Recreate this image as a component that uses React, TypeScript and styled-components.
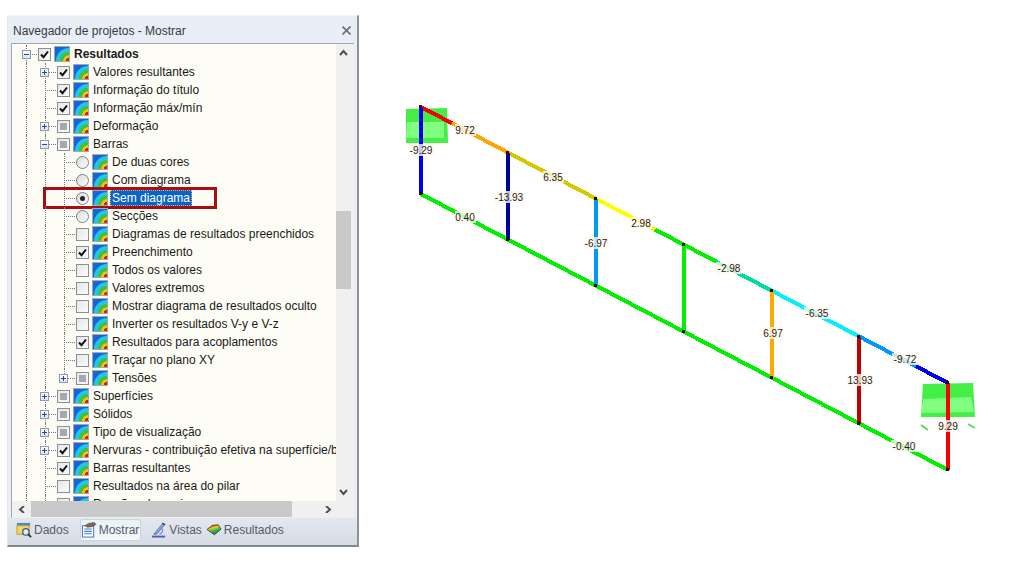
import React from 'react';
import styled, { createGlobalStyle } from 'styled-components';

const GlobalStyle = createGlobalStyle`
  html, body {
    margin: 0;
    background: #fff;
    overflow: hidden;
  }
`;

const FONT = `'Liberation Sans', Arial, sans-serif`;

const Page = styled.div`
  display: flex;
  align-items: flex-start;
  width: 1023px;
  height: 574px;
  font-family: ${FONT};
`;

const Panel = styled.div`
  box-sizing: border-box;
  width: 352px;
  height: 532px;
  margin: 15px 0 0 7px;
  display: flex;
  flex-direction: column;
  flex-shrink: 0;
  background: #e9edf5;
  border-top: 1px solid #f3f4f6;
  border-left: 1px solid #e4e6ea;
  border-right: 2px solid #8f9196;
  border-bottom: 2px solid #7f8a90;
`;

const Header = styled.div`
  height: 27px;
  display: flex;
  align-items: center;
  justify-content: space-between;
  padding: 2px 6px 0 5px;
  box-sizing: border-box;
`;

const Title = styled.span`
  font-size: 12px;
  color: #333b46;
`;

const CloseIcon = styled.svg`
  width: 9px;
  height: 9px;
  stroke: #6d6d6d;
  stroke-width: 1.6;
`;

const Frame = styled.div`
  margin: 0 3px 0 3px;
  height: 475px;
  box-sizing: border-box;
  border: 1px solid #a2a6ae;
  border-bottom-color: #b8bcc4;
  display: grid;
  grid-template-columns: 324px 18px;
  grid-template-rows: 457px 17px;
`;

const Tree = styled.div`
  background: #fdfdf6;
  overflow: hidden;
  padding-top: 1px;
  box-sizing: border-box;
`;

const Row = styled.div`
  position: relative;
  display: flex;
  align-items: center;
  height: 18px;
  padding-left: 5px;
  font-size: 12px;
  color: #1a1a1a;
  white-space: nowrap;
`;

const Indent = styled.span<{ $w: number; $spine?: boolean; $stub?: boolean; $end?: boolean }>`
  position: relative;
  display: flex;
  align-items: center;
  justify-content: center;
  width: ${p => p.$w}px;
  height: 18px;
  flex-shrink: 0;

  &::before {
    content: '';
    display: ${p => (p.$spine ? 'block' : 'none')};
    position: absolute;
    left: 50%;
    top: 0;
    bottom: ${p => (p.$end ? '9px' : '0')};
    border-left: 1px dotted #77797c;
  }

  &::after {
    content: '';
    display: ${p => (p.$stub ? 'block' : 'none')};
    position: absolute;
    left: 50%;
    right: -4px;
    top: 9px;
    border-top: 1px dotted #77797c;
  }
`;

const Expander = styled.span`
  position: relative;
  z-index: 1;
  box-sizing: border-box;
  width: 9px;
  height: 9px;
  border: 1px solid #8b9bb3;
  background: linear-gradient(#ffffff, #dfe3ea);
  display: block;

  svg {
    display: block;
    width: 7px;
    height: 7px;
    stroke: #2b4a8c;
    stroke-width: 1;
  }
`;

const Box = styled.span<{ $state: 'on' | 'off' | 'mixed' }>`
  position: relative;
  z-index: 1;
  box-sizing: border-box;
  width: 13px;
  height: 13px;
  margin-left: 3px;
  flex-shrink: 0;
  border: 1px solid #8c8e92;
  background: linear-gradient(135deg, #e6e7ea, #fbfbfd);
  display: flex;
  align-items: center;
  justify-content: center;

  &::before {
    content: '';
    display: ${p => (p.$state === 'mixed' ? 'block' : 'none')};
    width: 7px;
    height: 7px;
    background: #a6a8ac;
  }

  svg {
    width: 9px;
    height: 9px;
    stroke: #111;
    stroke-width: 2;
    fill: none;
  }
`;

const Radio = styled.span<{ $on?: boolean }>`
  position: relative;
  z-index: 1;
  box-sizing: border-box;
  width: 13px;
  height: 13px;
  margin-left: 3px;
  flex-shrink: 0;
  border: 1px solid #7f8185;
  border-radius: 50%;
  background: linear-gradient(135deg, #d8d9dd, #ffffff);
  display: flex;
  align-items: center;
  justify-content: center;

  &::before {
    content: '';
    display: ${p => (p.$on ? 'block' : 'none')};
    width: 5px;
    height: 5px;
    border-radius: 50%;
    background: #222;
  }
`;

const ColorIcon = styled.span`
  box-sizing: border-box;
  width: 16px;
  height: 16px;
  margin-left: 3px;
  flex-shrink: 0;
  border: 1px solid #a4a9ae;
  background: radial-gradient(
    circle at 100% 100%,
    #e11b14 0 3px,
    #f2c40f 3.5px 5.5px,
    #3fc23a 6px 9px,
    #22c6e6 9.5px 12.5px,
    #1565dc 13.5px
  );
`;

const Label = styled.span<{ $bold?: boolean; $selected?: boolean }>`
  margin-left: 2px;
  padding: 0 2px;
  line-height: 16px;
  height: 16px;
  font-weight: ${p => (p.$bold ? 700 : 400)};
  color: ${p => (p.$selected ? '#fff' : 'inherit')};
  background: ${p => (p.$selected ? '#0a64c8' : 'transparent')};
  outline: ${p => (p.$selected ? '1px dotted #e8b070' : 'none')};
  outline-offset: -1px;
`;

const Highlight = styled.span`
  position: absolute;
  left: 31px;
  top: -2px;
  width: 174px;
  height: 22px;
  box-sizing: border-box;
  border: 3px solid #a80d12;
  pointer-events: none;
`;

const ScrollV = styled.div`
  background: #f0f0f0;
  display: flex;
  flex-direction: column;
  align-items: flex-start;
`;

const ScrollH = styled.div`
  background: #f0f0f0;
  display: flex;
  align-items: flex-start;
  padding-left: 1px;
`;

const Corner = styled.div`
  background: #f0f0f0;
`;

const Arrow = styled.span<{ $w: number }>`
  width: ${p => p.$w}px;
  height: 17px;
  display: flex;
  align-items: center;
  justify-content: center;
  flex-shrink: 0;

  svg {
    width: 9px;
    height: 7px;
    fill: none;
    stroke: #505050;
    stroke-width: 2;
  }
`;

const ThumbV = styled.span`
  width: 15px;
  height: 78px;
  margin: 150px 0 195px;
  background: #c9c9c9;
  flex-shrink: 0;
`;

const ThumbH = styled.span`
  width: 261px;
  height: 16px;
  margin-right: 26px;
  background: #c9c9c9;
  flex-shrink: 0;
`;

const Tabs = styled.div`
  flex: 1;
  display: flex;
  align-items: flex-start;
  padding: 1px 0 0 6px;
  background: linear-gradient(#e3e7ef, #d6dbe5);
`;

const Tab = styled.div<{ $active?: boolean; $gap: number }>`
  box-sizing: border-box;
  height: 22px;
  display: flex;
  align-items: center;
  gap: 2px;
  margin-right: ${p => p.$gap}px;
  padding: 0 1px 0 ${p => (p.$active ? 0 : 1)}px;
  font-size: 12px;
  color: #555d68;
  border-radius: 3px;
  border: 1px solid ${p => (p.$active ? '#c9d6dc' : 'transparent')};
  background: ${p => (p.$active ? 'linear-gradient(#e8f2f4, #f4f7f8)' : 'transparent')};

  svg {
    width: 16px;
    height: 16px;
    flex-shrink: 0;
  }
`;

const Diagram = styled.svg`
  display: block;
  width: 664px;
  height: 574px;
  flex-shrink: 0;
`;

type RowData = {
  level: 0 | 1 | 2;
  text: string;
  kind: 'check' | 'radio';
  state: 'on' | 'off' | 'mixed';
  expand?: '+' | '-';
  bold?: boolean;
  selected?: boolean;
};

const rows: RowData[] = [
  { level: 0, text: 'Resultados', kind: 'check', state: 'on', expand: '-', bold: true },
  { level: 1, text: 'Valores resultantes', kind: 'check', state: 'on', expand: '+' },
  { level: 1, text: 'Informação do título', kind: 'check', state: 'on' },
  { level: 1, text: 'Informação máx/mín', kind: 'check', state: 'on' },
  { level: 1, text: 'Deformação', kind: 'check', state: 'mixed', expand: '+' },
  { level: 1, text: 'Barras', kind: 'check', state: 'mixed', expand: '-' },
  { level: 2, text: 'De duas cores', kind: 'radio', state: 'off' },
  { level: 2, text: 'Com diagrama', kind: 'radio', state: 'off' },
  { level: 2, text: 'Sem diagrama', kind: 'radio', state: 'on', selected: true },
  { level: 2, text: 'Secções', kind: 'radio', state: 'off' },
  { level: 2, text: 'Diagramas de resultados preenchidos', kind: 'check', state: 'off' },
  { level: 2, text: 'Preenchimento', kind: 'check', state: 'on' },
  { level: 2, text: 'Todos os valores', kind: 'check', state: 'off' },
  { level: 2, text: 'Valores extremos', kind: 'check', state: 'off' },
  { level: 2, text: 'Mostrar diagrama de resultados oculto', kind: 'check', state: 'off' },
  { level: 2, text: 'Inverter os resultados V-y e V-z', kind: 'check', state: 'off' },
  { level: 2, text: 'Resultados para acoplamentos', kind: 'check', state: 'on' },
  { level: 2, text: 'Traçar no plano XY', kind: 'check', state: 'off' },
  { level: 2, text: 'Tensões', kind: 'check', state: 'mixed', expand: '+' },
  { level: 1, text: 'Superfícies', kind: 'check', state: 'mixed', expand: '+' },
  { level: 1, text: 'Sólidos', kind: 'check', state: 'mixed', expand: '+' },
  { level: 1, text: 'Tipo de visualização', kind: 'check', state: 'mixed', expand: '+' },
  { level: 1, text: 'Nervuras - contribuição efetiva na superfície/barra', kind: 'check', state: 'on', expand: '+' },
  { level: 1, text: 'Barras resultantes', kind: 'check', state: 'on' },
  { level: 1, text: 'Resultados na área do pilar', kind: 'check', state: 'off' },
  { level: 1, text: 'Reações de apoio', kind: 'check', state: 'mixed' },
];

const ExpanderBox = ({ sign }: { sign: '+' | '-' }) => (
  <Expander>
    <svg viewBox="0 0 7 7">
      <path d={sign === '+' ? 'M1 3.5H6M3.5 1V6' : 'M1 3.5H6'} />
    </svg>
  </Expander>
);

const TreeRow = ({ row }: { row: RowData }) => {
  const widths = [18, 19, 19];
  const own = row.level;
  return (
    <Row>
      {widths.slice(0, own).map((w, i) => (
        <Indent key={i} $w={w} $spine={i === 0 || (i === 1 && own === 2)} />
      ))}
      <Indent $w={widths[own]} $spine $stub $end={row.text === 'Tensões'}>
        {row.expand && <ExpanderBox sign={row.expand} />}
      </Indent>
      {row.kind === 'radio' ? (
        <Radio $on={row.state === 'on'} />
      ) : (
        <Box $state={row.state}>
          {row.state === 'on' && (
            <svg viewBox="0 0 9 9">
              <path d="M1 4.5L3.5 7.2L8 1.5" />
            </svg>
          )}
        </Box>
      )}
      <ColorIcon />
      <Label $bold={row.bold} $selected={row.selected}>
        {row.text}
      </Label>
      {row.selected && <Highlight />}
    </Row>
  );
};

const Chevron = ({ dir }: { dir: 'up' | 'down' | 'left' | 'right' }) => {
  const d = {
    up: 'M1 6L4.5 2L8 6',
    down: 'M1 1L4.5 5L8 1',
    left: 'M6 0L2 3.5L6 7',
    right: 'M3 0L7 3.5L3 7',
  }[dir];
  return (
    <svg viewBox="0 0 9 7">
      <path d={d} />
    </svg>
  );
};

const DadosIcon = () => (
  <svg viewBox="0 0 17 17">
    <rect x="1" y="1" width="14" height="3" fill="#4a86d8" />
    <rect x="1" y="4" width="13" height="9" fill="#f6d66a" stroke="#c99a24" />
    <circle cx="10.5" cy="10.5" r="3.4" fill="#d9ecf8" stroke="#3f5f80" strokeWidth="1.4" />
    <path d="M13 13L16 16" stroke="#333" strokeWidth="2" />
  </svg>
);

const MostrarIcon = () => (
  <svg viewBox="0 0 17 17">
    <rect x="1.5" y="4" width="12" height="12" fill="#fff" stroke="#3c6fb8" />
    <path d="M3.5 7.5H11.5M3.5 10H11.5M3.5 12.5H11.5" stroke="#3c78c8" strokeWidth="1.2" />
    <path d="M4 4L8 1.5L14 0.5L16 2.5L12 5L7 5.5Z" fill="#7a6a5c" stroke="#4a4038" strokeWidth="0.6" />
  </svg>
);

const VistasIcon = () => (
  <svg viewBox="0 0 17 17">
    <path d="M1 15.5H15" stroke="#4a5fb0" strokeWidth="2" />
    <path d="M3 13L12 2L14 3.5L6 13Z" fill="#8ea4dc" stroke="#4a5fb0" strokeWidth="0.8" />
    <path d="M9 13C12 12 13 9 12 7" fill="none" stroke="#7f90c8" strokeWidth="1.4" />
    <path d="M12 1L15 3" stroke="#333" strokeWidth="1.4" />
  </svg>
);

const ResultadosIcon = () => (
  <svg viewBox="0 0 17 17">
    <defs>
      <linearGradient id="resGrad" x1="0.2" y1="0" x2="0.6" y2="1">
        <stop offset="0" stopColor="#e01818" />
        <stop offset="0.35" stopColor="#f0c820" />
        <stop offset="0.6" stopColor="#30c040" />
        <stop offset="1" stopColor="#1c60d8" />
      </linearGradient>
    </defs>
    <path d="M1 8L7 3.5L13 3L16 7.5L9 13.5Z" fill="url(#resGrad)" stroke="#2a2a2a" strokeWidth="0.8" />
  </svg>
);

const Seg = ({ x1, x2, color }: { x1: number; x2: number; color: string }) => {
  const slope = (383 - 107) / (948 - 421);
  return (
    <line
      x1={x1}
      y1={107 + (x1 - 421) * slope}
      x2={x2}
      y2={107 + (x2 - 421) * slope}
      stroke={color}
      strokeWidth={4}
    />
  );
};

const chord: [number, number, string][] = [
  [421, 452, '#f80000'],
  [452, 508, '#ffa400'],
  [508, 596, '#d4c800'],
  [596, 655, '#ffff00'],
  [655, 717, '#00f000'],
  [717, 772, '#00dca0'],
  [772, 859, '#00f0ff'],
  [859, 916, '#0098ff'],
  [916, 948, '#0000f0'],
];

const posts: [number, number, string][] = [
  [421, 107, '#0000f0'],
  [508, 153, '#00009c'],
  [596, 199, '#0098f0'],
  [684, 245, '#00f000'],
  [772, 291, '#ffa800'],
  [859, 337, '#c00000'],
  [948, 383, '#f80000'],
];

const labels: [number, number, string][] = [
  [465, 130, '9.72'],
  [553, 177, '6.35'],
  [641, 223, '2.98'],
  [729, 268, '-2.98'],
  [817, 313, '-6.35'],
  [905, 359, '-9.72'],
  [421, 150, '-9.29'],
  [509, 197, '-13.93'],
  [596, 243, '-6.97'],
  [773, 333, '6.97'],
  [860, 380, '13.93'],
  [948, 426, '9.29'],
  [465, 217, '0.40'],
  [904, 446, '-0.40'],
];

const ValueLabel = ({ x, y, text }: { x: number; y: number; text: string }) => {
  const w = text.length * 4.5 + 3;
  return (
    <g>
      <rect x={x - w / 2} y={y - 6} width={w} height={12} fill="#fff8ec" opacity={0.8} shapeRendering="crispEdges" />
      <text
        x={x}
        y={y + 3.5}
        textAnchor="middle"
        fontFamily="'Liberation Sans', sans-serif"
        fontSize="10"
        fill="#222"
      >
        {text}
      </text>
    </g>
  );
};

export default function App() {
  return (
    <Page>
      <GlobalStyle />
      <Panel>
        <Header>
          <Title>Navegador de projetos - Mostrar</Title>
          <CloseIcon viewBox="0 0 9 9">
            <path d="M0.5 0.5L8.5 8.5M8.5 0.5L0.5 8.5" />
          </CloseIcon>
        </Header>
        <Frame>
          <Tree>
            {rows.map(r => (
              <TreeRow key={r.text} row={r} />
            ))}
          </Tree>
          <ScrollV>
            <Arrow $w={15}><Chevron dir="up" /></Arrow>
            <ThumbV />
            <Arrow $w={15}><Chevron dir="down" /></Arrow>
          </ScrollV>
          <ScrollH>
            <Arrow $w={18}><Chevron dir="left" /></Arrow>
            <ThumbH />
            <Arrow $w={18}><Chevron dir="right" /></Arrow>
          </ScrollH>
          <Corner />
        </Frame>
        <Tabs>
          <Tab $gap={9}><DadosIcon />Dados</Tab>
          <Tab $gap={8} $active><MostrarIcon />Mostrar</Tab>
          <Tab $gap={0}><VistasIcon />Vistas</Tab>
          <Tab $gap={0}><ResultadosIcon />Resultados</Tab>
        </Tabs>
      </Panel>
      <Diagram viewBox="359 0 664 574">
        {/* left support */}
        <path d="M406 109L447 108L448 143L406 143Z" fill="#44ee44" />
        <path d="M407 122L444 122L444 138L406 138Z" fill="#80ff80" />
        {/* right support */}
        <path d="M923 384L973 383L975 417L921 417Z" fill="#44ee44" />
        <path d="M923 399L971 397L974 412L921 413Z" fill="#80ff80" />
        <path d="M921 425L928 430M968 424L975 428" stroke="#55dd55" strokeWidth="2" />
        <g shapeRendering="crispEdges">
          <line x1={421} y1={194} x2={948} y2={470} stroke="#00f000" strokeWidth={4} />
          {chord.map(([a, b, c]) => (
            <Seg key={a} x1={a} x2={b} color={c} />
          ))}
          {posts.map(([x, y, c]) => (
            <line key={x} x1={x} y1={y} x2={x} y2={y + 87} stroke={c} strokeWidth={4} />
          ))}
          {posts.map(([x, y]) => (
            <g key={x} fill="#2a0505">
              <rect x={x - 2} y={y - 2} width={3} height={3} />
              <rect x={x - 2} y={y + 85} width={3} height={3} />
            </g>
          ))}
        </g>
        {labels.map(([x, y, t]) => (
          <ValueLabel key={t} x={x} y={y} text={t} />
        ))}
      </Diagram>
    </Page>
  );
}
